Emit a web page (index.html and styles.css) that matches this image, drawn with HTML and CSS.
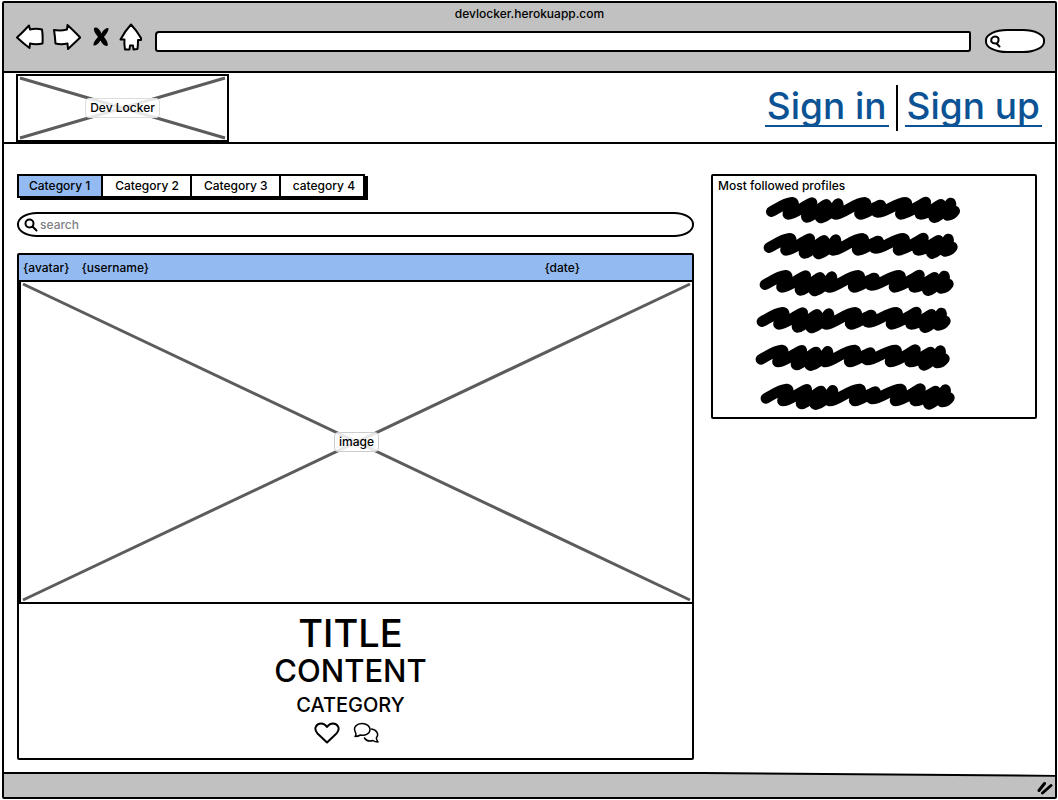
FILE: index.html
```html
<!DOCTYPE html>
<html lang="en">
<head>
<meta charset="utf-8">
<meta name="viewport" content="width=device-width, initial-scale=1">
<title>Dev Locker</title>
<link rel="stylesheet" href="styles.css">
</head>
<body>
<div class="window">
  <header class="chrome">
    <div class="chrome-title">devlocker.herokuapp.com</div>
    <div class="chrome-bar">
      <div class="chrome-buttons">
        <button class="icon-button" type="button" aria-label="Back">
          <svg width="28" height="26" viewBox="0 0 28 26"><path d="M1 13.500Q7 8 13 1.500L14 5.500Q20 4 26 5.500Q27 12 26.500 19.500Q20 21 14 19.500L13.500 24Q8 20 1 13.500Z" class="sketch"/></svg>
        </button>
        <button class="icon-button" type="button" aria-label="Forward">
          <svg width="28" height="26" viewBox="0 0 28 26"><path d="M1 6Q8 7 14 5.500L14.500 1Q20 6 27.200 13.500L15 25L14.500 19.500Q8 21 2.500 19.500Q2 12 1 6Z" class="sketch"/></svg>
        </button>
        <button class="icon-button stop" type="button" aria-label="Stop">
          <svg width="18" height="22" viewBox="0 0 18 22"><path d="M2 2Q6 0 9.500 7.500Q12 2 16.500 2Q17 5 12 11Q17 17 15.500 20Q11 20 8.500 14.500Q5 20 1.500 19.500Q1 16 6 11Q1 5 2 2Z"/></svg>
        </button>
        <button class="icon-button" type="button" aria-label="Home">
          <svg width="24" height="28" viewBox="0 0 24 28"><path d="M12 1.500Q18 8 22 15L22 17 19 17Q19 22 18.500 26L14.500 26.500 14 22.500 11 22.500 10.500 26.500 6 26.500Q5 21 5.500 16.500L1.500 16.500Q6 8 12 1.500Z" class="sketch"/></svg>
        </button>
      </div>
      <input class="address" type="text" aria-label="Address">
      <label class="quick-search">
        <svg width="11" height="13" viewBox="0 0 11 13"><path d="M1.500 3.500Q4 0 8 2.500Q9.500 6 7 8.500Q3 9 1.200 6.500ZM6.500 8.500 9.500 11.500" class="outline"/></svg>
        <input type="text" aria-label="Quick search">
      </label>
    </div>
  </header>

  <nav class="navbar">
    <a class="logo placeholder" href="#">
      <svg class="cross" viewBox="0 0 100 100" preserveAspectRatio="none"><path d="M0 0 100 100M100 0 0 100"/></svg>
      <span class="tag">Dev Locker</span>
    </a>
    <div class="auth">
      <a href="#">Sign in</a>
      <span class="divider"></span>
      <a href="#">Sign up</a>
    </div>
  </nav>

  <div class="content">
    <main class="feed">
      <div class="tabs">
        <button class="tab active" type="button">Category 1</button>
        <button class="tab" type="button">Category 2</button>
        <button class="tab" type="button">Category 3</button>
        <button class="tab" type="button">category 4</button>
      </div>
      <label class="search">
        <svg width="14" height="14" viewBox="0 0 14 14"><path d="M9.500 5.500A4 4 0 1 1 1.500 5.500A4 4 0 0 1 9.500 5.500M8.500 8.500 12.500 12.500" class="outline"/></svg>
        <input type="text" placeholder="search" aria-label="search">
      </label>
      <article class="post">
        <div class="post-head">
          <span>{avatar}</span>
          <span>{username}</span>
          <span class="date">{date}</span>
        </div>
        <div class="post-image placeholder">
          <svg class="cross" viewBox="0 0 100 100" preserveAspectRatio="none"><path d="M0 0 100 100M100 0 0 100"/></svg>
          <span class="tag">image</span>
        </div>
        <div class="post-body">
          <h1>TITLE</h1>
          <h2>CONTENT</h2>
          <h3>CATEGORY</h3>
          <div class="actions">
            <button class="icon-button" type="button" aria-label="Like">
              <svg width="26" height="22" viewBox="0 0 26 22"><path d="M13 20.500 3.500 11.500C-1 6.500 2.500 1.500 7 1.500C10 1.500 12 3.500 13 5C14 3.500 16 1.500 19 1.500C23.500 1.500 27 6.500 22.500 11.500Z" class="outline"/></svg>
            </button>
            <button class="icon-button" type="button" aria-label="Comments">
              <svg width="26" height="22" viewBox="0 0 26 22"><path d="M2 14.500C3.200 13 3.200 12 2.500 10.500C-.500 5 4 1.500 9 1.500C14 1.500 17 4.500 17 7.500C17 11.500 12.500 14 7.500 13Q5 14.500 2 14.500ZM18.500 7C24 7.500 26 12.500 23.500 15.500Q23 17.500 25 20Q22 20 20 18.500C16.500 19.500 13 18.500 11.500 16" class="outline thin"/></svg>
            </button>
          </div>
        </div>
      </article>
    </main>

    <aside class="profiles">
      <h4>Most followed profiles</h4>
      <svg class="scribbles" viewBox="0 0 966 666" role="img" aria-label="Profile names">
        <defs>
          <path id="scribble" d="M0 0C22-12 40-26 62-28C78-26 46 2 50 8C70 8 92-14 122-27C124-18 100 12 106 17C120 18 145-14 165-22C156-6 140 14 149 19C170 14 190-10 200-24C206-10 185 4 192 8C215 8 252-28 280-28C296-24 258 2 266 8C285 8 310-16 328-20C334-12 306 0 318 2C345 2 375-28 403-28C418-24 382 2 388 8C410 8 440-18 463-29C466-16 438 6 448 8C470 8 490-14 508-22C502-8 482 14 489 18C505 14 530-14 538-26C544-12 522 6 528 11C538 10 546 4 550-2"/>
        </defs>
        <use href="#scribble" x="175" y="50"/>
        <use href="#scribble" x="168" y="158"/>
        <use href="#scribble" x="156" y="269"/>
        <use href="#scribble" x="147" y="380"/>
        <use href="#scribble" x="144" y="493"/>
        <use href="#scribble" x="159" y="610"/>
      </svg>
    </aside>
  </div>

  <footer class="statusbar">
    <svg class="edge" viewBox="0 0 1052 26" preserveAspectRatio="none"><path d="M0 1 700 1 1052 4 1052 26 0 26Z" class="fill"/><path d="M0 1 700 1 1052 4" class="line"/></svg>
    <svg class="grip" width="16" height="14" viewBox="0 0 16 14"><path d="M2 9.500 7.500 2.500M5.500 12 14 4.500"/></svg>
  </footer>
</div>
</body>
</html>
```
FILE: styles.css
```css
* {
  box-sizing: border-box;
}

body {
  margin: 0;
  padding: 1px 1px 1px 2px;
  background: #fff;
  color: #000;
  font: 500 12px/18px Inter, "Liberation Sans", sans-serif;
}

.window {
  display: flex;
  flex-direction: column;
  min-height: calc(100vh - 2px);
  border: 2px solid #000;
  border-radius: 2px;
}

svg {
  display: block;
  flex: none;
}

button,
input {
  font: inherit;
  color: inherit;
}

.icon-button {
  padding: 0;
  border: 0;
  background: none;
}

.sketch {
  fill: #fff;
  stroke: #000;
  stroke-width: 2;
  stroke-linejoin: round;
}

.outline {
  fill: none;
  stroke: #000;
  stroke-width: 2;
  stroke-linecap: round;
  stroke-linejoin: round;
}

.outline.thin {
  stroke-width: 1.5;
}

/* Browser chrome */

.chrome {
  height: 70px;
  padding: 2px 12px 0;
  background: #c1c1c1;
  border-bottom: 2px solid #000;
}

.chrome-title {
  text-align: center;
}

.chrome-bar {
  display: flex;
  align-items: center;
  height: 28px;
  margin-right: -2px;
}

.chrome-buttons {
  display: flex;
  align-items: center;
  gap: 9px;
  margin-right: 12px;
}

.stop {
  margin-left: 2px;
}

.address {
  flex: 1;
  min-width: 0;
  height: 21px;
  margin-top: 8px;
  padding: 0 6px;
  border: 2px solid #000;
  border-radius: 4px 2px 3px 3px;
  background: #fff;
}

.quick-search {
  display: flex;
  align-items: center;
  width: 60px;
  height: 24px;
  margin: 8px 0 0 14px;
  padding: 0 4px 0 3px;
  border: 2px solid #000;
  border-radius: 22px / 11px;
  background: #fff;
}

.quick-search input,
.search input {
  flex: 1;
  min-width: 0;
  padding: 0;
  border: 0;
  background: none;
}

/* Site header */

.navbar {
  display: flex;
  justify-content: space-between;
  align-items: center;
  height: 71px;
  padding: 0 13px 0 12px;
  border-bottom: 2px solid #000;
}

.placeholder {
  position: relative;
  display: flex;
  align-items: center;
  justify-content: center;
  border: 2px solid #000;
}

.cross {
  position: absolute;
  inset: 2px;
  width: calc(100% - 4px);
  height: calc(100% - 4px);
  overflow: visible;
}

.cross path {
  fill: none;
  stroke: #5c5c5c;
  stroke-width: 3;
  vector-effect: non-scaling-stroke;
}

.tag {
  position: relative;
  padding: 0 4px;
  border: 1px solid #ccc;
  border-radius: 4px;
  background: rgba(255, 255, 255, 0.85);
}

.logo {
  width: 213px;
  height: 68px;
  color: #000;
  text-decoration: none;
}

.logo .tag {
  border-color: #ddd;
}

.auth {
  display: flex;
  align-items: center;
  gap: 7px;
}

.auth a {
  padding: 0 2px 2px;
  border-bottom: 2px solid #0b5394;
  color: #0b5394;
  font-size: 37px;
  line-height: 34px;
  text-decoration: none;
}

.divider {
  width: 2px;
  height: 46px;
  background: #000;
}

/* Page content */

.content {
  display: flex;
  flex: 1;
  align-items: flex-start;
  gap: 17px;
  padding: 30px 18px 12px 13px;
}

.feed {
  flex: 1;
  min-width: 0;
}

.tabs {
  display: flex;
  width: fit-content;
  border: 2px solid #000;
  box-shadow: 3px 2px 0 #000;
}

.tab {
  height: 20px;
  padding: 0 11px 0 12px;
  border: 0;
  border-right: 2px solid #000;
  background: #fff;
}

.tab:first-child {
  padding-left: 10px;
}

.tab:last-child {
  border-right: 0;
  padding-right: 8px;
}

.active,
.post-head {
  background: #94baf2;
}

.search {
  display: flex;
  align-items: center;
  gap: 2px;
  height: 25px;
  margin: 14px 0 16px;
  padding: 0 12px 0 5px;
  border: 2px solid #000;
  border-radius: 20px / 12px;
}

.search input::placeholder {
  color: #808085;
  opacity: 1;
}

.post {
  border: 2px solid #000;
  border-radius: 2px;
}

.post-head {
  display: flex;
  align-items: center;
  gap: 12px;
  height: 25px;
  padding: 0 112px 0 4px;
}

.date {
  margin-left: auto;
}

.post-image {
  height: 324px;
  border-width: 2px 0 2px 2px;
}

.post-body {
  display: flex;
  flex-direction: column;
  align-items: center;
  padding: 8px 10px 14px 0;
}

.post-body h1,
.post-body h2,
.post-body h3,
.profiles h4 {
  margin: 0;
  font-weight: 500;
}

.post-body h1 {
  font-size: 38px;
  line-height: 42px;
}

.post-body h2 {
  font-size: 31px;
  line-height: 34px;
}

.post-body h3 {
  font-size: 20px;
  line-height: 34px;
}

.actions {
  display: flex;
  gap: 13px;
  margin-right: 8px;
}

.profiles {
  flex: 0 0 326px;
  border: 2px solid #000;
  border-radius: 2px;
}

.profiles h4 {
  padding: 1px 5px 0;
  font-size: 12px;
  line-height: 18px;
}

.scribbles {
  width: 100%;
  fill: none;
  stroke: #000;
  stroke-width: 32;
  stroke-linecap: round;
  stroke-linejoin: round;
}

/* Status bar */

.statusbar {
  position: relative;
  display: flex;
  align-items: center;
  justify-content: flex-end;
  height: 25px;
  padding: 6px 2px 0;
}

.edge {
  position: absolute;
  inset: 0;
  width: 100%;
  height: 100%;
}

.fill {
  fill: #c1c1c1;
}

.line {
  fill: none;
  stroke: #000;
  stroke-width: 2;
}

.grip {
  position: relative;
  fill: none;
  stroke: #000;
  stroke-width: 3;
  stroke-linecap: round;
}
```
